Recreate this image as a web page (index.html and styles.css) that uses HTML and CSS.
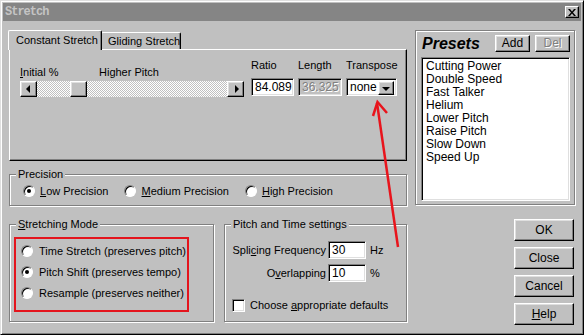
FILE: index.html
```html
<!DOCTYPE html>
<html lang="en">
<head>
    <meta charset="UTF-8">
    <title>Stretch</title>
    <link rel="stylesheet" href="styles.css">
</head>
<body>
    <div class="window">
        <div class="titlebar">
            <span class="title">Stretch</span>
            <span class="close-btn">
                <svg width="8" height="7" viewBox="0 0 8 7"><path d="M0 0h2l2 2.5L6 0h2L5 3.5 8 7H6L4 4.5 2 7H0l3-3.5z" fill="#000"/></svg>
            </span>
        </div>

        <div class="client">
            <div class="left-col">
                <!-- Tabs -->
                <div class="tabs">
                    <div class="tab active">Constant Stretch</div>
                    <div class="tab">Gliding Stretch</div>
                </div>
                <div class="tab-panel">
                    <div class="slider-area">
                        <div class="slider-labels">
                            <span class="lbl-initial"><u>I</u>nitial %</span>
                            <span>Higher Pitch</span>
                        </div>
                        <div class="scrollbar">
                            <span class="bevel sb-btn"><span class="tri-left"></span></span>
                            <span class="sb-track"><span class="bevel sb-thumb"></span></span>
                            <span class="bevel sb-btn"><span class="tri-right"></span></span>
                        </div>
                    </div>
                    <div class="field ratio">
                        <span class="field-label">Ratio</span>
                        <div class="textbox">84.089</div>
                    </div>
                    <div class="field length">
                        <span class="field-label">Length</span>
                        <div class="textbox disabled">36.325</div>
                    </div>
                    <div class="field transpose">
                        <span class="field-label">Transpose</span>
                        <div class="textbox combo">
                            <span>none</span>
                            <span class="bevel combo-btn"><span class="tri-down"></span></span>
                        </div>
                    </div>
                </div>

                <!-- Precision -->
                <fieldset class="group precision">
                    <legend>Precision</legend>
                    <div class="radio-row">
                        <span class="option"><span class="radio checked"></span><u>L</u>ow Precision</span>
                        <span class="option"><span class="radio"></span><u>M</u>edium Precision</span>
                        <span class="option"><span class="radio"></span><u>H</u>igh Precision</span>
                    </div>
                </fieldset>

                <div class="bottom-row">
                    <fieldset class="group stretch-mode">
                        <legend><u>S</u>tretching Mode</legend>
                        <div class="highlight">
                            <span class="option"><span class="radio"></span>Time Stretch (preserves pitch)</span>
                            <span class="option"><span class="radio checked"></span>Pitch Shift (preserves tempo)</span>
                            <span class="option"><span class="radio"></span>Resample (preserves neither)</span>
                        </div>
                    </fieldset>

                    <fieldset class="group pitch-time">
                        <legend>Pitch and Time settings</legend>
                        <div class="pt-body">
                            <div class="pt-row">
                                <span class="pt-label">Spli<u>c</u>ing Frequency</span>
                                <div class="textbox pt-input">30</div>
                                <span class="pt-unit">Hz</span>
                            </div>
                            <div class="pt-row">
                                <span class="pt-label">O<u>v</u>erlapping</span>
                                <div class="textbox pt-input">10</div>
                                <span class="pt-unit">%</span>
                            </div>
                            <div class="check-row">
                                <span class="checkbox"></span>
                                <span>Choose <u>a</u>ppropriate defaults</span>
                            </div>
                        </div>
                    </fieldset>
                </div>
            </div>

            <div class="right-col">
                <div class="presets">
                    <div class="presets-head">
                        <span class="presets-title">Presets</span>
                        <span class="bevel small-btn">Add</span>
                        <span class="bevel small-btn disabled">Del</span>
                    </div>
                    <ul class="preset-list">
                        <li>Cutting Power</li>
                        <li>Double Speed</li>
                        <li>Fast Talker</li>
                        <li>Helium</li>
                        <li>Lower Pitch</li>
                        <li>Raise Pitch</li>
                        <li>Slow Down</li>
                        <li>Speed Up</li>
                    </ul>
                </div>
                <div class="buttons">
                    <span class="bevel btn">OK</span>
                    <span class="bevel btn">Close</span>
                    <span class="bevel btn">Cancel</span>
                    <span class="bevel btn"><u>H</u>elp</span>
                </div>
            </div>
        </div>

        <!-- annotation arrow drawn over the dialog -->
        <svg class="annotation" width="584" height="335" viewBox="0 0 584 335">
            <path d="M398 247L377 103" stroke="#e8141c" stroke-width="2.5" fill="none"/>
            <path d="M373 116L377.5 102L387 113" stroke="#e8141c" stroke-width="2.5" fill="none"/>
        </svg>
    </div>
</body>
</html>
```

FILE: styles.css
```css
body {
    margin: 0;
    font-family: "Liberation Sans", Arial, sans-serif;
    font-size: 11px;
    line-height: 13px;
    color: #000;
}

u {
    text-decoration-thickness: 1px;
    text-underline-offset: 1px;
}

/* Window frame */
.window {
    position: relative;
    box-sizing: border-box;
    width: 584px;
    height: 335px;
    background: #c0c0c0;
    border: 1px solid;
    border-color: #dfdfdf #000 #000 #dfdfdf;
    box-shadow: inset 1px 1px 0 #fff, inset -1px -1px 0 #808080;
    padding: 2px;
}

.titlebar {
    height: 18px;
    background: #858585;
    display: flex;
    align-items: center;
    justify-content: space-between;
    padding: 0 2px 0 2px;
}

.title {
    font-family: "Liberation Mono", "Courier New", monospace;
    font-weight: bold;
    font-size: 12px;
    letter-spacing: -1px;
    color: #c4c4c4;
}

.close-btn {
    box-sizing: border-box;
    width: 14px;
    height: 12px;
    display: flex;
    justify-content: center;
    align-items: center;
    background: #c0c0c0;
    border: 1px solid;
    border-color: #fff #000 #000 #fff;
    box-shadow: inset -1px -1px 0 #808080;
}

/* Generic raised bevel */
.bevel {
    box-sizing: border-box;
    background: #c0c0c0;
    border: 1px solid;
    border-color: #fff #000 #000 #fff;
    box-shadow: inset -1px -1px 0 #808080, inset 1px 1px 0 #dfdfdf;
    display: flex;
    justify-content: center;
    align-items: center;
}

.client {
    display: flex;
    gap: 8px;
    padding: 9px 4px 0 6px;
}

.left-col {
    width: 398px;
    display: flex;
    flex-direction: column;
}

/* Tabs */
.tabs {
    display: flex;
    align-items: flex-end;
    height: 19px;
}

.tab {
    box-sizing: border-box;
    height: 17px;
    width: 80px;
    padding-left: 6px;
    display: flex;
    align-items: center;
    white-space: nowrap;
    background: #c0c0c0;
    border: 1px solid;
    border-bottom: none;
    border-color: #fff #000 #000 #fff;
    border-radius: 2px 2px 0 0;
    box-shadow: inset -1px 0 0 #808080;
}

.tab.active {
    height: 20px;
    width: 94px;
    margin-left: -1px;
    margin-right: -1px;
    margin-bottom: -1px;
    padding-left: 7px;
    position: relative;
    z-index: 1;
}

.tab-panel {
    box-sizing: border-box;
    height: 112px;
    display: flex;
    align-items: flex-start;
    padding: 9px 0 0 10px;
    border: 1px solid;
    border-color: #fff #000 #000 #fff;
    box-shadow: inset -1px -1px 0 #808080;
}

.slider-area {
    width: 224px;
    margin-top: 6px;
    margin-right: 7px;
}

.slider-labels {
    display: flex;
    height: 14px;
    line-height: 14px;
}

.lbl-initial {
    width: 79px;
}

.scrollbar {
    display: flex;
    height: 16px;
    margin-top: 2px;
}

.sb-btn {
    width: 17px;
    height: 16px;
}

.sb-track {
    flex: 1;
    background-color: #c0c0c0;
    background-image: repeating-conic-gradient(#fff 0 25%, #c0c0c0 0 50%);
    background-size: 2px 2px;
}

.sb-thumb {
    width: 17px;
    height: 16px;
    margin-left: 33px;
}

.tri-left,
.tri-right,
.tri-down {
    width: 0;
    height: 0;
    border: 4px solid transparent;
}

.tri-left {
    border-right-color: #000;
    border-left-width: 0;
    margin-left: -2px;
}

.tri-right {
    border-left-color: #000;
    border-right-width: 0;
    margin-left: 2px;
}

.tri-down {
    border-top-color: #000;
    border-bottom-width: 0;
    border-left-width: 4px;
    border-right-width: 4px;
    margin-top: 2px;
}

/* Text fields */
.field {
    display: flex;
    flex-direction: column;
    margin-right: 4px;
}

.field-label {
    height: 13px;
    margin-bottom: 6px;
}

.textbox {
    box-sizing: border-box;
    height: 18px;
    background: #fff;
    border: 1px solid;
    border-color: #808080 #fff #fff #808080;
    box-shadow: inset 1px 1px 0 #000, inset -1px -1px 0 #dfdfdf;
    padding: 2px 0 0 3px;
    font-size: 12px;
    line-height: 13px;
}

.ratio .textbox { width: 43px; }
.length .textbox { width: 44px; }

.textbox.disabled {
    background: #c0c0c0;
    color: #808080;
    text-shadow: 1px 1px 0 #fff;
}

.combo {
    width: 51px;
    display: flex;
    justify-content: space-between;
    padding: 2px 2px 2px 3px;
}

.combo-btn {
    width: 16px;
    height: 14px;
}

/* Group boxes */
.group {
    margin: 0;
    padding: 0;
    min-width: 0;
    border: 1px solid #808080;
    box-shadow: inset 1px 1px 0 #fff, 1px 1px 0 #fff;
}

.group legend {
    margin-left: 6px;
    padding: 0 2px;
    line-height: 14px;
    background: #c0c0c0;
}

.precision {
    margin-top: 6px;
}

.radio-row {
    display: flex;
    gap: 16px;
    padding: 3px 0 7px 13px;
}

.option {
    display: flex;
    align-items: center;
    height: 14px;
}

.radio {
    box-sizing: border-box;
    width: 12px;
    height: 12px;
    margin-right: 5px;
    border-radius: 50%;
    background: #fff;
    border: 1px solid;
    border-color: #808080 #fff #fff #808080;
    box-shadow: inset 1px 1px 0 #000;
    display: flex;
    justify-content: center;
    align-items: center;
}

.radio.checked::after {
    content: "";
    width: 4px;
    height: 4px;
    border-radius: 50%;
    background: #000;
}

.bottom-row {
    display: flex;
    gap: 10px;
    margin-top: 11px;
}

.stretch-mode {
    width: 205px;
    box-sizing: border-box;
}

.highlight {
    width: 175px;
    height: 75px;
    box-sizing: border-box;
    margin: 6px 0 9px 4px;
    border: 2px solid #e4141c;
    padding: 5px 0 0 5px;
    display: flex;
    flex-direction: column;
    gap: 7px;
}

.highlight .radio {
    margin-right: 6px;
}

.pitch-time {
    flex: 1;
}

.pt-body {
    padding-top: 10px;
}

.pt-row {
    display: flex;
    align-items: center;
    height: 18px;
    margin-bottom: 5px;
}

.pt-label {
    width: 101px;
    text-align: right;
}

.pt-input {
    width: 38px;
    margin-left: 2px;
}

.pt-unit {
    margin-left: 4px;
}

.check-row {
    display: flex;
    align-items: center;
    margin-top: 17px;
    padding-left: 7px;
}

.checkbox {
    box-sizing: border-box;
    width: 13px;
    height: 13px;
    margin-right: 5px;
    background: #fff;
    border: 1px solid;
    border-color: #808080 #fff #fff #808080;
    box-shadow: inset 1px 1px 0 #000, inset -1px -1px 0 #dfdfdf;
}

/* Presets */
.right-col {
    width: 160px;
    display: flex;
    flex-direction: column;
}

.presets {
    box-sizing: border-box;
    height: 175px;
    border: 1px solid #808080;
    box-shadow: inset 1px 1px 0 #fff, 1px 1px 0 #fff;
    padding: 4px 4px 3px 5px;
    display: flex;
    flex-direction: column;
}

.presets-head {
    display: flex;
    align-items: center;
    height: 17px;
    gap: 5px;
}

.presets-title {
    font-size: 16px;
    font-weight: bold;
    font-style: italic;
    width: 68px;
    padding-left: 1px;
}

.small-btn {
    width: 35px;
    height: 17px;
    font-size: 12px;
}

.small-btn.disabled {
    color: #808080;
    text-shadow: 1px 1px 0 #fff;
}

.preset-list {
    flex: 1;
    margin: 5px 0 0 0;
    padding: 2px 0 0 4px;
    list-style: none;
    background: #fff;
    border: 1px solid;
    border-color: #808080 #fff #fff #808080;
    box-shadow: inset 1px 1px 0 #000, inset -1px -1px 0 #dfdfdf;
    font-size: 12px;
}

.buttons {
    align-self: flex-end;
    display: flex;
    flex-direction: column;
    gap: 6px;
    margin-top: 14px;
    margin-right: 1px;
}

.btn {
    width: 60px;
    height: 22px;
    font-size: 12px;
}

.annotation {
    position: absolute;
    left: -1px;
    top: -1px;
    pointer-events: none;
}
```
